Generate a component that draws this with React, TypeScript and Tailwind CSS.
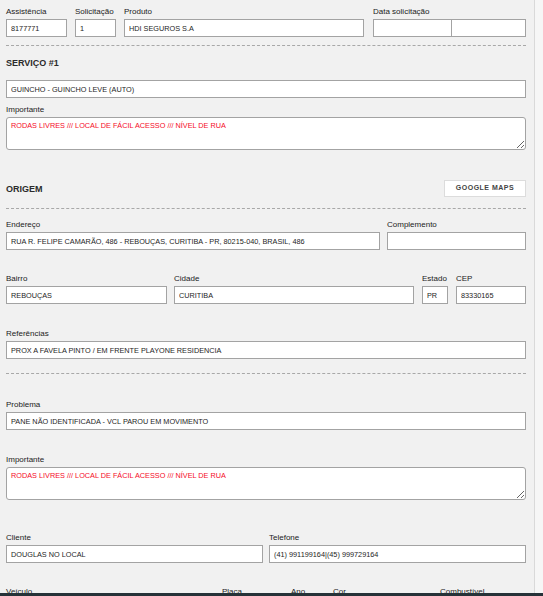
import React from 'react';

const font = { fontFamily: '"Liberation Sans", Arial, sans-serif' };

const Label = ({ children }: { children: React.ReactNode }) => (
  <div className="h-[12px] leading-[12px] mb-px text-[8px] text-[#222] whitespace-nowrap">{children}</div>
);

const Box = ({ value = '', width = 'w-full' }: { value?: string; width?: string }) => (
  <input
    readOnly
    value={value}
    className={`block h-[18px] min-w-0 ${width} border border-[#a3a3a3] bg-white px-[4px] text-[7.3px] text-[#1e1e1e] outline-none`}
  />
);

const Field = ({ label, value, className = '' }: { label: string; value?: string; className?: string }) => (
  <div className={`min-w-0 ${className}`}>
    <Label>{label}</Label>
    <Box value={value} />
  </div>
);

const Note = ({ text }: { text: string }) => (
  <textarea
    readOnly
    value={text}
    className="block h-[33px] w-full rounded-[3px] border border-[#a3a3a3] bg-white px-[4px] pt-[3px] text-[7.3px] leading-[10px] text-[#f50a28] outline-none"
  />
);

const Dashed = ({ className = '' }: { className?: string }) => (
  <div className={`border-t border-dashed border-[#a8a8a8] ${className}`} />
);

const Heading = ({ children }: { children: React.ReactNode }) => (
  <div className="h-[12px] leading-[12px] text-[9px] font-bold text-[#2b2b2b]">{children}</div>
);

export default function App() {
  return (
    <div className="flex h-[596px] overflow-hidden bg-[#f6f6f6]" style={font}>
      <div className="w-[535px] shrink-0 border-r border-[#d9d9d9] bg-[#f1f1f1] pl-[6px] pr-[8px] pt-[6px]">
        {/* Cabeçalho */}
        <div className="flex">
          <Field label="Assistência" value="8177771" className="w-[61px] shrink-0" />
          <Field label="Solicitação" value="1" className="ml-[8px] w-[41px] shrink-0" />
          <Field label="Produto" value="HDI SEGUROS S.A" className="ml-[8px] w-[240px] shrink-0" />
          <div className="ml-[9px] min-w-0 flex-1">
            <Label>Data solicitação</Label>
            <div className="flex">
              <Box width="w-[79px] shrink-0" />
              <Box width="-ml-px flex-1" />
            </div>
          </div>
        </div>

        <Dashed className="mt-[8px]" />

        {/* Serviço */}
        <div className="mt-[11px]">
          <Heading>SERVIÇO #1</Heading>
        </div>
        <div className="mt-[11px]">
          <Box value="GUINCHO - GUINCHO LEVE (AUTO)" />
        </div>
        <div className="mt-[6px]">
          <Label>Importante</Label>
          <div className="mt-px">
            <Note text="RODAS LIVRES /// LOCAL DE FÁCIL ACESSO /// NÍVEL DE RUA" />
          </div>
        </div>

        {/* Origem */}
        <div className="mt-[30px] flex h-[17px] items-center justify-between">
          <Heading>ORIGEM</Heading>
          <button className="h-[17px] w-[82px] border border-[#dcdcdc] bg-white text-[7px] font-bold tracking-[0.5px] text-[#444]">
            GOOGLE MAPS
          </button>
        </div>
        <Dashed className="mt-[11px]" />

        <div className="mt-[10px] flex">
          <Field
            label="Endereço"
            value="RUA R. FELIPE CAMARÃO, 486 - REBOUÇAS, CURITIBA - PR, 80215-040, BRASIL, 486"
            className="w-[374px] shrink-0"
          />
          <Field label="Complemento" className="ml-[7px] flex-1" />
        </div>

        <div className="mt-[23px] flex">
          <Field label="Bairro" value="REBOUÇAS" className="w-[161px] shrink-0" />
          <Field label="Cidade" value="CURITIBA" className="ml-[7px] w-[240px] shrink-0" />
          <Field label="Estado" value="PR" className="ml-[8px] w-[26px] shrink-0" />
          <Field label="CEP" value="83330165" className="ml-[8px] flex-1" />
        </div>

        <Field
          label="Referências"
          value="PROX A FAVELA PINTO / EM FRENTE PLAYONE RESIDENCIA"
          className="mt-[24px]"
        />

        <Dashed className="mt-[14px]" />

        <Field label="Problema" value="PANE NÃO IDENTIFICADA - VCL PAROU EM MOVIMENTO" className="mt-[25px]" />

        <div className="mt-[24px]">
          <Label>Importante</Label>
          <div className="mt-px">
            <Note text="RODAS LIVRES /// LOCAL DE FÁCIL ACESSO /// NÍVEL DE RUA" />
          </div>
        </div>

        <div className="mt-[32px] grid grid-cols-2 gap-[6px]">
          <Field label="Cliente" value="DOUGLAS NO LOCAL" />
          <Field label="Telefone" value="(41) 991199164|(45) 999729164" />
        </div>

        <div className="mt-[23px] flex">
          <Field label="Veículo" className="w-[208px] shrink-0" />
          <Field label="Placa" className="ml-[8px] w-[61px] shrink-0" />
          <Field label="Ano" className="ml-[8px] w-[34px] shrink-0" />
          <Field label="Cor" className="ml-[8px] w-[99px] shrink-0" />
          <Field label="Combustível" className="ml-[8px] flex-1" />
        </div>
      </div>

      <div className="fixed bottom-0 left-0 right-0 h-[3px] bg-[#263238]" />
    </div>
  );
}
